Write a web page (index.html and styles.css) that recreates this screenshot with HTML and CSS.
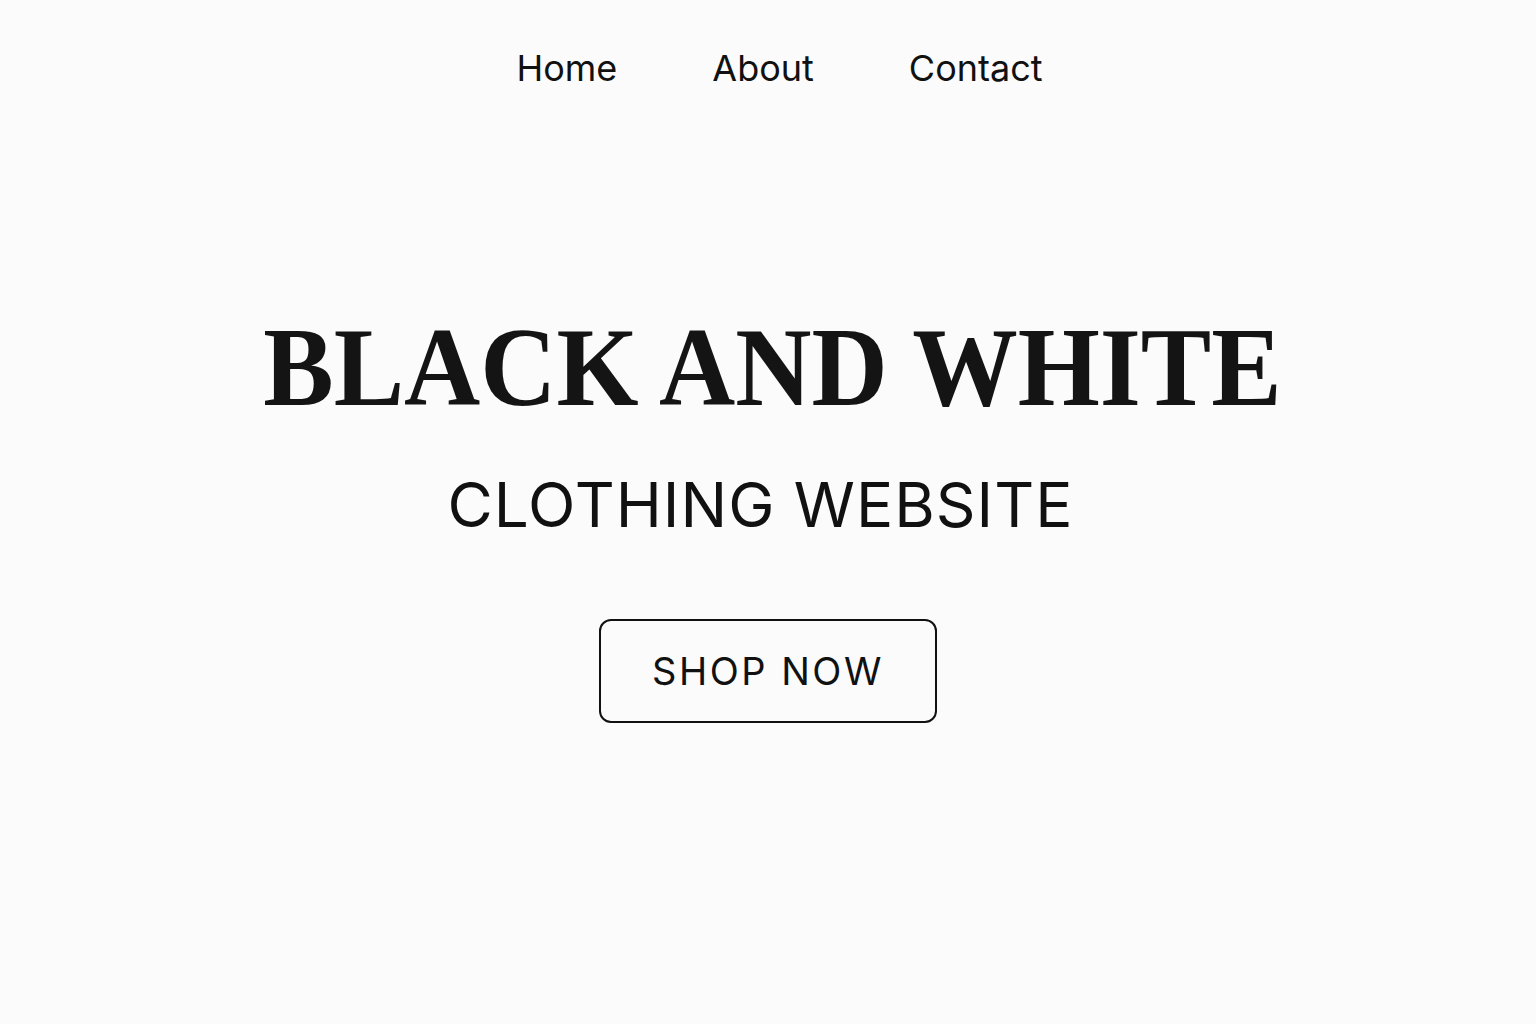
FILE: index.html
```html
<!DOCTYPE html>
<html lang="en">
<head>
<meta charset="utf-8">
<title>Black and White</title>
<link rel="stylesheet" href="styles.css">
</head>
<body>
<nav class="nav">
  <a class="nav-link" href="#">Home</a>
  <a class="nav-link" href="#">About</a>
  <a class="nav-link" href="#">Contact</a>
</nav>
<main class="hero">
  <h1 class="title">BLACK AND WHITE</h1>
  <p class="subtitle">CLOTHING WEBSITE</p>
  <a class="btn" href="#">SHOP NOW</a>
</main>
</body>
</html>
```
FILE: styles.css
```css
html, body {
  margin: 0;
  padding: 0;
  background: #fbfbfb;
  color: #111;
  height: 100%;
}
body {
  font-family: Inter, "Liberation Sans", sans-serif;
}
.nav {
  display: flex;
  justify-content: center;
  gap: 95px;
  padding-top: 45px;
  padding-left: 23px;
}
.nav-link {
  color: #111;
  text-decoration: none;
  font-size: 36px;
  line-height: 46px;
}
.hero {
  display: flex;
  flex-direction: column;
  align-items: center;
  padding-top: 211px;
}
.title {
  margin: 0 0 0 8px;
  font-family: "Liberation Serif", "Times New Roman", serif;
  font-weight: 700;
  font-size: 112px;
  line-height: 130px;
  letter-spacing: 0;
  color: #141414;
  transform: scaleX(0.942);
  white-space: nowrap;
}
.subtitle {
  margin: 33px 15px 0 0;
  font-size: 62px;
  line-height: 80px;
  letter-spacing: 1px;
  font-weight: 400;
}
.btn {
  margin-top: 74px;
  width: 334px;
  height: 100px;
  box-sizing: content-box;
  border: 2px solid #111;
  border-radius: 12px;
  display: flex;
  align-items: center;
  justify-content: center;
  color: #111;
  text-decoration: none;
  font-size: 38px;
  letter-spacing: 2.5px;
}
```
